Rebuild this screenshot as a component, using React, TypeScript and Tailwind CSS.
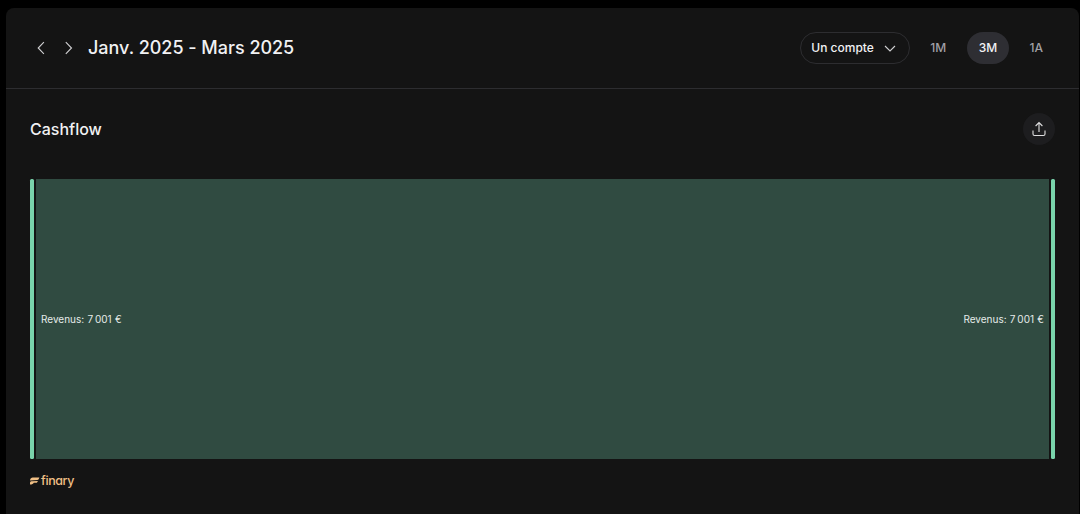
import { useState } from 'react'

const periods = ['1M', '3M', '1A']

function FinaryLogo() {
  return (
    <div className="flex h-4 items-center gap-[1px] text-[#f1c086]">
      <svg width="10" height="8" viewBox="0 0 10 8" fill="currentColor" className="shrink-0">
        <path d="M2.8 0.6H9.4L8.8 1.9C8.5 2.6 8 3 7.2 3.1L0 3.4C0.3 1.5 1.3 0.6 2.8 0.6Z" />
        <path d="M1.7 4.2L7.9 3.9L7.4 4.9C7 5.6 6.6 5.8 6 5.8H3.8C3.2 7 2.2 7.6 0 7.6V5.9C0 4.8 0.6 4.2 1.7 4.2Z" />
      </svg>
      <span className="text-[12.5px] leading-4 font-medium tracking-[-0.4px] [font-feature-settings:'cv11']">finary</span>
    </div>
  )
}

function Flow() {
  return (
    <div className="mt-[34px] flex h-[280px] gap-[2px]">
      <div className="w-1 rounded-[1.5px] bg-[#79d3ab]" />
      <div className="flex flex-1 items-center justify-between bg-[#304b41] px-[5px] text-[10px] leading-4 [word-spacing:0.5px] text-[#e6ebe9]">
        <span>Revenus: 7&#8239;001 €</span>
        <span>Revenus: 7&#8239;001 €</span>
      </div>
      <div className="w-1 rounded-[1.5px] bg-[#79d3ab]" />
    </div>
  )
}

export default function App() {
  const [period, setPeriod] = useState('3M')

  return (
    <div className="h-[514px] overflow-hidden bg-black pt-2 pr-px pl-1.5 font-['Inter',sans-serif] text-[#f1f1f3] antialiased">
      <main className="h-full rounded-t-lg bg-[#141414]">
        {/* Period header */}
        <header className="flex h-[81px] items-center border-b border-[#2d2d30] pr-6 pl-[29px]">
          <div className="flex gap-4">
            <button aria-label="Previous">
              <svg width="12" height="14" viewBox="0 0 12 14" fill="none" stroke="#d0d0d2" strokeWidth="1.1">
                <path d="M8.9 1.2L3.2 7L8.9 12.8" />
              </svg>
            </button>
            <button aria-label="Next">
              <svg width="12" height="14" viewBox="0 0 12 14" fill="none" stroke="#d0d0d2" strokeWidth="1.1">
                <path d="M2.8 1.2L8.5 7L2.8 12.8" />
              </svg>
            </button>
          </div>
          <h1 className="ml-[13px] text-lg font-medium tracking-[-0.02px]">Janv. 2025 - Mars 2025</h1>

          <div className="ml-auto flex items-center text-xs font-medium">
            <button className="mr-2 flex h-8 w-[110px] items-center justify-between rounded-full border border-[#2d2d30] pr-3 pl-2.5">
              Un compte
              <svg width="14" height="8" viewBox="0 0 14 8" fill="none" stroke="#d0d0d2" strokeWidth="1.1">
                <path d="M2 2L7 7L12 2" />
              </svg>
            </button>
            <div className="flex gap-[8.4px]">
              {periods.map((p) => (
                <button
                  key={p}
                  onClick={() => setPeriod(p)}
                  className={`h-8 rounded-full px-3 ${
                    p === period ? 'bg-[#2e2e33] text-[#f1f1f3]' : 'text-[#a0a0a6]'
                  }`}
                >
                  {p}
                </button>
              ))}
            </div>
          </div>
        </header>

        {/* Cashflow */}
        <section className="px-6 pt-6">
          <div className="flex h-8 items-center justify-between">
            <h2 className="text-base font-medium">Cashflow</h2>
            <button aria-label="Export" className="flex size-8 items-center justify-center rounded-full bg-[#1d1d1f]">
              <svg width="16" height="16" viewBox="0 0 16 16" fill="none" stroke="#dededf" strokeWidth="1.1">
                <path d="M8 11V1.6M4.6 5L8 1.6L11.4 5M2 9.5V13C2 13.9 2.6 14.5 3.5 14.5H12.5C13.4 14.5 14 13.9 14 13V9.5" />
              </svg>
            </button>
          </div>
          <Flow />
          <div className="mt-3.5">
            <FinaryLogo />
          </div>
        </section>
      </main>
    </div>
  )
}
